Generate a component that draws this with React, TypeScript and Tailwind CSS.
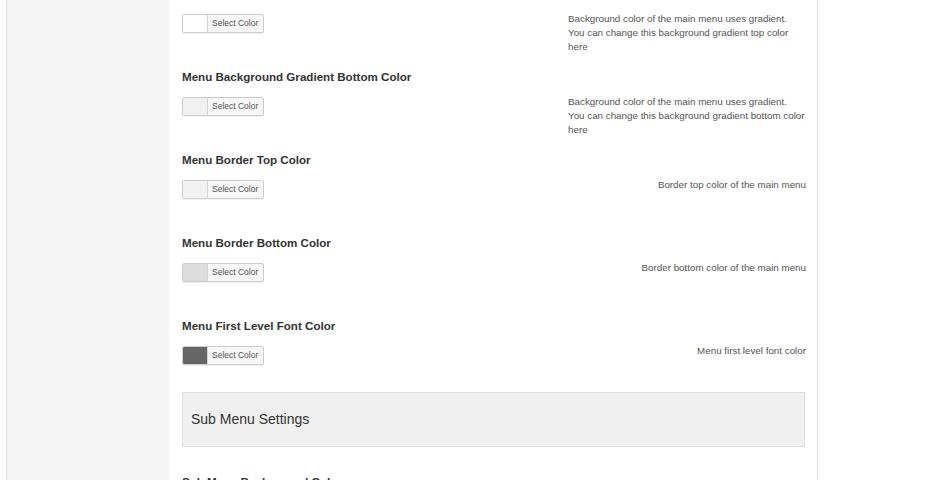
import React from "react";

type Row = { title: string; swatch: string; desc: React.ReactNode };

const rows: Row[] = [
  {
    title: "Menu Background Gradient Top Color",
    swatch: "bg-[#ffffff]",
    desc: (
      <>
        Background color of the main menu uses gradient.
        <br />
        You can change this background gradient top color here
      </>
    ),
  },
  {
    title: "Menu Background Gradient Bottom Color",
    swatch: "bg-[#f1f1f1]",
    desc: (
      <>
        Background color of the main menu uses gradient.
        <br />
        You can change this background gradient bottom color here
      </>
    ),
  },
  {
    title: "Menu Border Top Color",
    swatch: "bg-[#f1f1f1]",
    desc: "Border top color of the main menu",
  },
  {
    title: "Menu Border Bottom Color",
    swatch: "bg-[#dddddd]",
    desc: "Border bottom color of the main menu",
  },
  {
    title: "Menu First Level Font Color",
    swatch: "bg-[#666666]",
    desc: "Menu first level font color",
  },
];

function ColorButton({ swatch }: { swatch: string }) {
  return (
    <div className="flex h-[19px] w-[82px] shrink-0 overflow-hidden rounded-[2px] border border-[#cccccc] bg-[#f7f7f7] shadow-[0_1px_0_rgba(0,0,0,0.05)]">
      <div className={`h-full w-[25px] border-r border-[#d4d4d4] ${swatch}`} />
      <div className="flex flex-1 items-center pl-[4px] text-[8.5px] leading-none text-[#555555]">
        Select Color
      </div>
    </div>
  );
}

function SettingRow({ row, last }: { row: Row; last?: boolean }) {
  return (
    <div className={last ? "h-[74px]" : "h-[83px]"}>
      <div className="h-[16px] text-[11.6px] font-bold leading-[16px] text-[#333333]">
        {row.title}
      </div>
      <div className="mt-[12px] flex items-start">
        <ColorButton swatch={row.swatch} />
        <div className="-mt-[2px] ml-auto mr-[-1px] max-w-[238px] text-[9.8px] leading-[14px] text-[#555555]">
          {row.desc}
        </div>
      </div>
    </div>
  );
}

export default function App() {
  return (
    <div
      className="flex h-[480px] w-[944px] overflow-hidden bg-white"
      style={{ fontFamily: '"Liberation Sans", Arial, sans-serif' }}
    >
      <div className="w-[6px] shrink-0 bg-white" />
      <div className="h-full w-[163px] shrink-0 border-l border-[#e3e3e3] bg-[#f5f5f5]" />
      <div className="w-[1px] shrink-0 bg-white" />
      <div className="h-full w-[648px] shrink-0 border-r border-[#e3e3e3] bg-white px-[12px]">
        <div className="-mt-[14px]">
          {rows.map((r, i) => (
            <SettingRow key={r.title} row={r} last={i === rows.length - 1} />
          ))}
          <div className="flex h-[55px] items-center border border-[#dddddd] bg-[#f0f0f0] pl-[8px] text-[14px] text-[#333333]">
            Sub Menu Settings
          </div>
          <div className="mt-[27px] h-[16px] text-[11.6px] font-bold leading-[16px] text-[#333333]">
            Sub Menu Background Color
          </div>
        </div>
      </div>
      <div className="flex-1 bg-white" />
    </div>
  );
}
